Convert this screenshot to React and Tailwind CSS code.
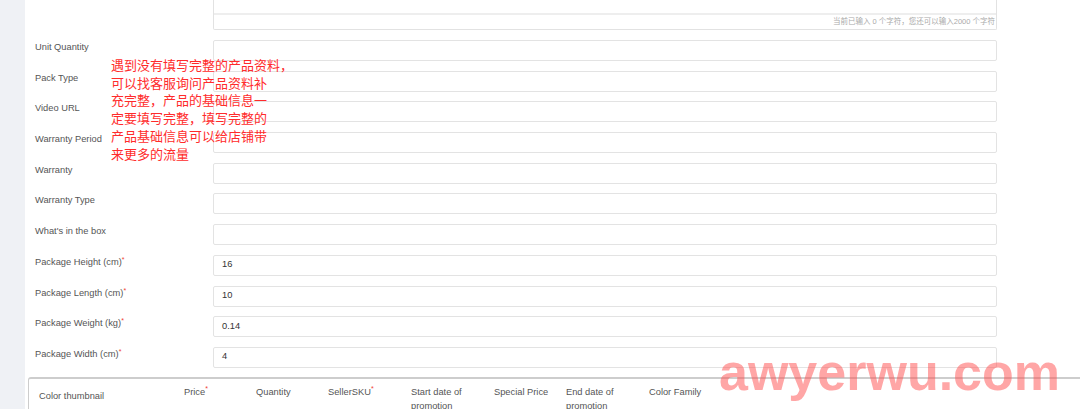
import React from "react";

const rows = [
  { label: "Unit Quantity" },
  { label: "Pack Type" },
  { label: "Video URL" },
  { label: "Warranty Period" },
  { label: "Warranty" },
  { label: "Warranty Type" },
  { label: "What's in the box" },
  { label: "Package Height (cm)", required: true, value: "16" },
  { label: "Package Length (cm)", required: true, value: "10" },
  { label: "Package Weight (kg)", required: true, value: "0.14" },
  { label: "Package Width (cm)", required: true, value: "4" },
];

const columns = [
  { title: "Price", required: true, w: "w-[72px]" },
  { title: "Quantity", w: "w-[72px]" },
  { title: "SellerSKU", required: true, w: "w-[83px]" },
  { title: "Start date of promotion", w: "w-[83px]" },
  { title: "Special Price", w: "w-[72px]" },
  { title: "End date of promotion", w: "w-[83px]" },
  { title: "Color Family", w: "w-[83px]" },
];

function Star() {
  return <span className="align-top text-[7px] leading-none text-[#f04134]">*</span>;
}

export default function App() {
  return (
    <div className="flex h-[409px] overflow-hidden bg-white font-['Liberation_Sans',Arial,sans-serif] text-[#555]">
      <div className="w-[25px] shrink-0 bg-[#eff1f5]" />

      <div className="relative flex-1">
        {/* description textarea tail + counter */}
        <div className="ml-[188px] w-[784px] rounded-b-[2px] border-x border-b border-[#e2e2e2]">
          <div className="h-[15px] border-b-2 border-[#eeeeee]" />
          <div className="h-[14px] pr-[1px] text-right text-[7.5px] leading-[14px] text-[#aaa] font-['Liberation_Sans','Noto_Sans_CJK_SC',sans-serif]">
            当前已输入 0 个字符，您还可以输入2000 个字符
          </div>
        </div>

        <div className="mt-[10px] flex flex-col gap-[9.7px] pl-[10px]">
          {rows.map((r) => (
            <div key={r.label} className="flex">
              <div className="w-[178px] pt-[1px] text-[9.3px] leading-[12px]">
                {r.label}
                {r.required && <Star />}
              </div>
              <div className="flex h-[21px] w-[784px] items-center rounded-[2px] border border-[#e3e3e3] px-[8px] text-[9.3px] text-[#333]">
                {r.value}
              </div>
            </div>
          ))}
        </div>

        {/* variants table header */}
        <div className="mt-[9px] ml-[3px] h-[60px] rounded-tl-[3px] border-l border-t-2 border-[#cdcdcd]">
          <div className="flex pl-[10px] pt-[6px] text-[9.3px] leading-[14px]">
            <div className="w-[145px] pt-[4px]">Color thumbnail</div>
            {columns.map((c) => (
              <div key={c.title} className={`${c.w} pr-[8px]`}>
                {c.title}
                {c.required && <Star />}
              </div>
            ))}
          </div>
        </div>

        {/* annotation */}
        <div className="absolute left-[86px] top-[56px] whitespace-nowrap text-[13px] leading-[17.7px] text-[#ff2b2b] font-['Noto_Sans_CJK_SC',sans-serif]">
          遇到没有填写完整的产品资料，
          <br />
          可以找客服询问产品资料补
          <br />
          充完整，产品的基础信息一
          <br />
          定要填写完整，填写完整的
          <br />
          产品基础信息可以给店铺带
          <br />
          来更多的流量
        </div>

        {/* watermark */}
        <div className="absolute left-[694px] top-[346px] whitespace-nowrap text-[52px] font-bold leading-[52px] text-[#ff4d4d]/50">
          awyerwu.com
        </div>
      </div>
    </div>
  );
}
